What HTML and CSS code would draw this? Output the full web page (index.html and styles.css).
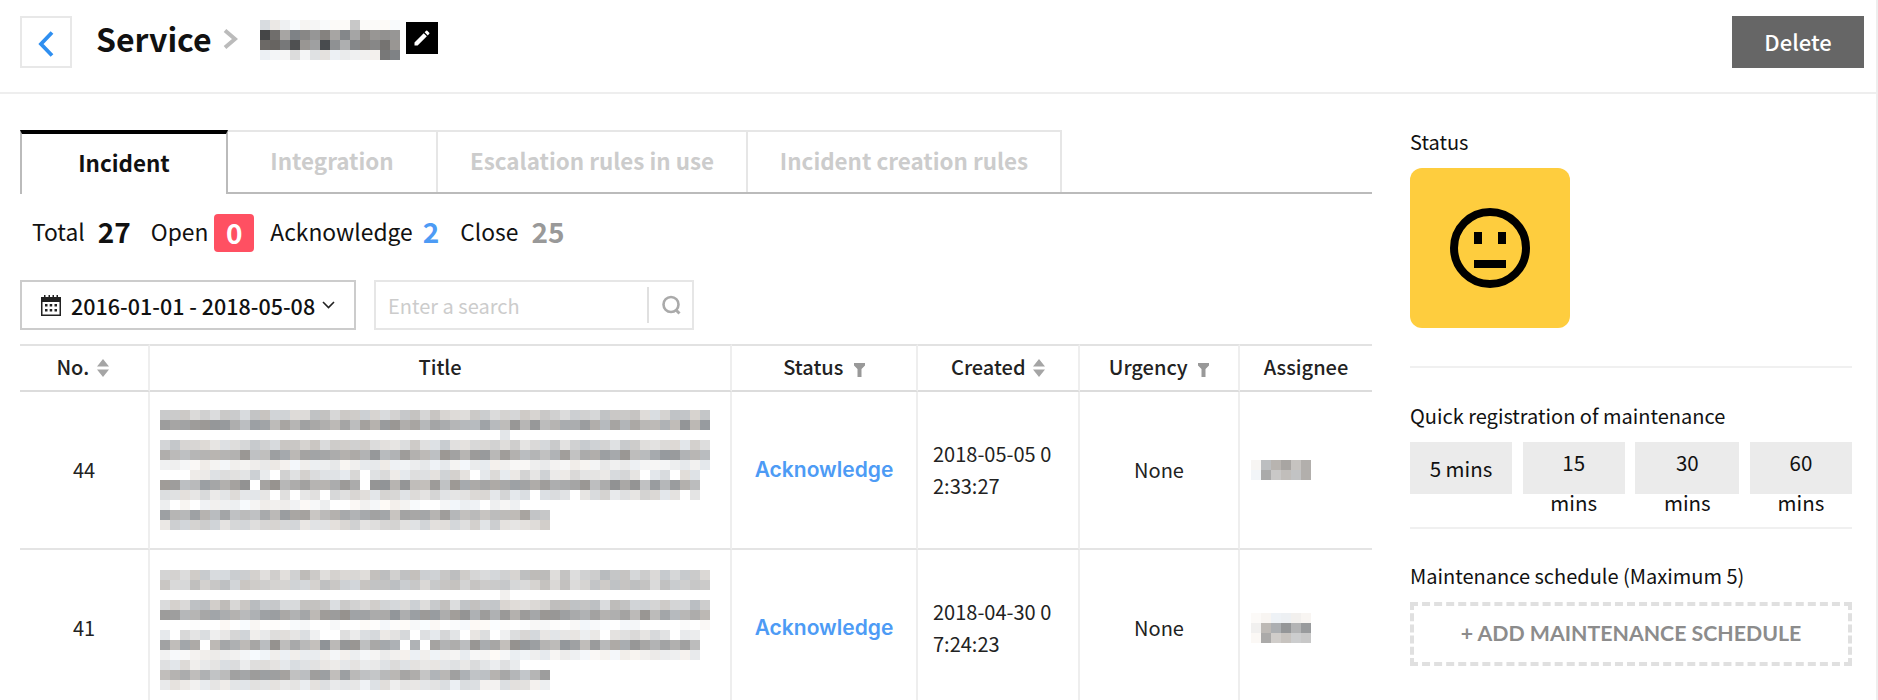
FILE: index.html
```html
<!DOCTYPE html>
<html lang="en">

<head>
    <meta charset="UTF-8">
    <meta name="viewport" content="width=device-width, initial-scale=1.0">
    <title>Service</title>
    <link rel="stylesheet" href="styles.css">
</head>

<body>
    <div class="page">
        <div class="top">
            <a class="back">
                <svg width="16" height="26" viewBox="0 0 16 26">
                    <path d="M14 1.500L3 13l11 11.500" fill="none" stroke="#2f8ff0" stroke-width="3.800"></path>
                </svg>
            </a>
            <h1 class="title">Service</h1>
            <svg class="crumb" width="15" height="20" viewBox="0 0 15 20">
                <path d="M2 1.500L12 10 2 18.500" fill="none" stroke="#bbb" stroke-width="4"></path>
            </svg>
            <svg class="mosaic name" data-key="name" width="140" height="40"></svg>
            <a class="edit">
                <svg width="20" height="20" viewBox="0 0 24 24">
                    <path fill="#fff" d="M3 17.250V21h3.750L17.810 9.940l-3.750-3.750L3 17.250zM20.710 7.040a1 1 0 0 0 0-1.410l-2.340-2.340a1 1 0 0 0-1.410 0l-1.830 1.830 3.750 3.750 1.830-1.830z"></path>
                </svg>
            </a>
            <button class="delete">Delete</button>
        </div>

        <div class="main">
            <div class="left">
                <div class="tabs">
                    <div class="tab active tab1">Incident</div>
                    <div class="tab tab2">Integration</div>
                    <div class="tab tab3">Escalation rules in use</div>
                    <div class="tab tab4">Incident creation rules</div>
                </div>

                <div class="stats">
                    <span class="stat-label">Total</span>
                    <b class="stat-num total">27</b>
                    <span class="stat-label">Open</span>
                    <b class="badge">0</b>
                    <span class="stat-label">Acknowledge</span>
                    <b class="stat-num ack">2</b>
                    <span class="stat-label">Close</span>
                    <b class="stat-num closed">25</b>
                </div>

                <div class="filters">
                    <div class="date-box">
                        <svg width="22" height="22" viewBox="0 0 22 22">
                            <path fill="#222" d="M1 3h3V1h1.500v2h3V1H10v2h2.500V1H14v2h2.500V1H18v2h3v19H1zM2.500 8v12.500h17V8z"></path>
                            <path fill="#222" d="M5 10h2.500v2.500H5zM9.700 10h2.500v2.500H9.700zM14.500 10H17v2.500h-2.500zM5 15h2.500v2.500H5zM9.700 15h2.500v2.500H9.700zM14.500 15H17v2.500h-2.500z"></path>
                        </svg>
                        <span class="date-text">2016-01-01 - 2018-05-08</span>
                        <svg width="13" height="8" viewBox="0 0 13 8">
                            <path d="M1 1l5.500 5.500L12 1" fill="none" stroke="#222" stroke-width="1.600"></path>
                        </svg>
                    </div>
                    <div class="search-box">
                        <span class="search-text">Enter a search</span>
                        <span class="search-icon">
                            <svg width="22" height="20" viewBox="0 0 22 20">
                                <circle cx="10" cy="9.500" r="7.500" fill="none" stroke="#aaa" stroke-width="2.600"></circle>
                                <path d="M14.500 14.500l4 4" stroke="#aaa" stroke-width="3"></path>
                            </svg>
                        </span>
                    </div>
                </div>

                <table class="list">
                    <thead>
                        <tr>
                            <th class="col-no">No. <svg class="sort" width="12" height="18" viewBox="0 0 12 18"><path fill="#a5a5a5" d="M6 0l6 7.500H0zM0 10.500h12L6 18z"></path></svg></th>
                            <th class="col-title">Title</th>
                            <th class="col-status">Status <svg class="funnel" width="11" height="14" viewBox="0 0 11 14"><path fill="#999" d="M0 0h11v2.500L7.500 6v8h-4V6L0 2.500z"></path></svg></th>
                            <th class="col-created">Created <svg class="sort" width="12" height="18" viewBox="0 0 12 18"><path fill="#a5a5a5" d="M6 0l6 7.500H0zM0 10.500h12L6 18z"></path></svg></th>
                            <th class="col-urgency">Urgency <svg class="funnel" width="11" height="14" viewBox="0 0 11 14"><path fill="#999" d="M0 0h11v2.500L7.500 6v8h-4V6L0 2.500z"></path></svg></th>
                            <th class="col-assignee">Assignee</th>
                        </tr>
                    </thead>
                    <tbody>
                        <tr>
                            <td class="center">44</td>
                            <td class="cell-title"><svg class="mosaic" data-key="title1" width="550" height="120"></svg></td>
                            <td class="center"><a class="status-link">Acknowledge</a></td>
                            <td class="cell-date">2018-05-05 02:33:27</td>
                            <td class="center">None</td>
                            <td class="cell-user"><svg class="mosaic" data-key="user1" width="60" height="20"></svg></td>
                        </tr>
                        <tr>
                            <td class="center">41</td>
                            <td class="cell-title lower"><svg class="mosaic" data-key="title2" width="550" height="120"></svg></td>
                            <td class="center"><a class="status-link">Acknowledge</a></td>
                            <td class="cell-date">2018-04-30 07:24:23</td>
                            <td class="center">None</td>
                            <td class="cell-user"><svg class="mosaic" data-key="user2" width="60" height="30"></svg></td>
                        </tr>
                    </tbody>
                </table>
            </div>

            <div class="side">
                <div class="side-label">Status</div>
                <div class="status-box">
                    <svg width="80" height="80" viewBox="0 0 80 80">
                        <circle cx="40" cy="40" r="36" fill="none" stroke="#000" stroke-width="8"></circle>
                        <rect x="24" y="24" width="8" height="12"></rect>
                        <rect x="48" y="24" width="8" height="12"></rect>
                        <rect x="24" y="52" width="32" height="8"></rect>
                    </svg>
                </div>
                <div class="rule rule1"></div>

                <div class="side-label label2">Quick registration of maintenance</div>
                <div class="quick">
                    <button class="quick-btn">5 mins</button>
                    <button class="quick-btn">15 mins</button>
                    <button class="quick-btn wide">30 mins</button>
                    <button class="quick-btn">60 mins</button>
                </div>
                <div class="rule rule2"></div>

                <div class="side-label label3">Maintenance schedule (Maximum 5)</div>
                <div class="add-box">+ ADD MAINTENANCE SCHEDULE</div>
            </div>
        </div>
    </div>
    <script src="mosaic.js"></script>
</body>

</html>
```

FILE: styles.css
```css
* {
    margin: 0;
    padding: 0;
    box-sizing: border-box;
    font-family: "Noto Sans CJK KR", "Noto Sans", sans-serif;
}

html,
body {
    height: 700px;
    overflow: hidden;
    background: #fff;
    color: #222;
}

.page {
    height: 700px;
    border-right: 2px solid #eee;
    overflow: hidden;
}

svg {
    display: block;
}

/* top bar */
.top {
    display: flex;
    align-items: flex-start;
    height: 94px;
    padding: 16px 12px 0 20px;
    border-bottom: 2px solid #eee;
}

.back {
    display: flex;
    align-items: center;
    justify-content: center;
    width: 52px;
    height: 52px;
    padding-top: 4px;
    border: 2px solid #e8e8e8;
}

.title {
    margin-left: 24px;
    font-size: 32px;
    line-height: 44px;
    font-weight: 700;
    color: #111;
}

.crumb {
    margin: 13px 0 0 11px;
}

.name {
    margin: 4px 0 0 22px;
}

.edit {
    display: flex;
    align-items: center;
    justify-content: center;
    width: 32px;
    height: 32px;
    margin: 6px 0 0 6px;
    background: #000;
}

.delete {
    width: 132px;
    height: 52px;
    margin-left: auto;
    padding-bottom: 2px;
    border: none;
    background: #666;
    color: #fff;
    font-size: 22px;
    font-weight: 500;
}

/* layout */
.main {
    display: flex;
    padding: 36px 24px 0 20px;
}

.left {
    width: 1352px;
    flex-shrink: 0;
}

.side {
    width: 442px;
    margin-left: 38px;
}

/* tabs */
.tabs {
    display: flex;
    height: 64px;
    border-bottom: 2px solid #bbb;
}

.tab {
    height: 62px;
    border-top: 2px solid #e6e6e6;
    border-right: 2px solid #e6e6e6;
    font-size: 22.400px;
    line-height: 56px;
    font-weight: 700;
    text-align: center;
    color: #ccc;
}

.tab.active {
    height: 64px;
    border-top: 4px solid #000;
    border-left: 2px solid #bbb;
    border-right: 2px solid #bbb;
    background: #fff;
    color: #111;
    line-height: 56px;
}

.tab1 { width: 208px; }
.tab2 { width: 210px; }
.tab3 { width: 310px; }
.tab4 { width: 314px; }

/* counters */
.stats {
    display: flex;
    align-items: center;
    height: 38px;
    margin-top: 20px;
    padding-left: 12px;
}

.stat-label {
    padding-bottom: 4px;
    font-size: 22.800px;
    color: #111;
}

.stat-num {
    padding-bottom: 4px;
    font-size: 28px;
    font-weight: 700;
    line-height: 32px;
}

.total {
    margin: 0 20px 0 13px;
    color: #111;
}

.ack {
    margin: 0 21px 0 10px;
    color: #4d9bf5;
}

.closed {
    margin-left: 13px;
    color: #999;
}

.badge {
    width: 40px;
    height: 38px;
    margin: 0 16px 0 6px;
    border-radius: 4px;
    background: #ff5062;
    color: #fff;
    font-size: 28px;
    line-height: 36px;
    text-align: center;
}

/* date and search */
.filters {
    display: flex;
    height: 50px;
    margin-top: 28px;
}

.date-box {
    display: flex;
    align-items: center;
    width: 336px;
    border: 2px solid #ccc;
    padding-left: 18px;
}

.date-text {
    margin: 0 7px 0 9px;
    font-size: 21.500px;
    font-weight: 500;
    white-space: nowrap;
    color: #111;
}

.search-box {
    display: flex;
    align-items: center;
    width: 320px;
    margin-left: 18px;
    border: 2px solid #e6e6e6;
    padding-left: 12px;
}

.search-text {
    width: 259px;
    font-size: 20px;
    color: #ccc;
}

.search-icon {
    display: flex;
    align-items: center;
    height: 36px;
    padding-left: 12px;
    border-left: 2px solid #e0e0e0;
}

/* table */
.list {
    width: 1352px;
    margin-top: 14px;
    table-layout: fixed;
    border-collapse: separate;
    border-spacing: 0;
}

.list th {
    height: 48px;
    padding-bottom: 4px;
    border-top: 2px solid #e2e2e2;
    border-bottom: 2px solid #dcdcdc;
    border-right: 2px solid #eee;
    font-size: 20px;
    font-weight: 500;
    color: #222;
    white-space: nowrap;
}

.list th:last-child,
.list td:last-child {
    border-right: none;
}

.list th svg {
    display: inline-block;
    margin-left: 3px;
    vertical-align: -2px;
}

.list th .funnel {
    margin-left: 6px;
}

.col-no { width: 130px; padding-right: 3px; }
.col-title { width: 582px; }
.col-status { width: 186px; }
.col-created { width: 162px; }
.col-urgency { width: 160px; }
.col-assignee { width: 132px; }

.list td {
    height: 158px;
    border-bottom: 2px solid #e4e4e4;
    border-right: 2px solid #eee;
    font-size: 20px;
    color: #222;
}

.list td.center {
    padding-bottom: 2px;
    text-align: center;
}

.cell-title {
    padding-left: 10px;
}

.list td.lower {
    padding-top: 4px;
}

.list td.cell-date {
    padding: 0 17px 1px 15px;
    line-height: 32px;
    word-break: break-all;
}

.cell-user {
    padding-left: 11px;
}

.status-link {
    position: relative;
    top: -1px;
    font-family: Inter, sans-serif;
    font-size: 21px;
    font-weight: 600;
    color: #4d9bf5;
}

/* right column */
.side-label {
    height: 26px;
    font-size: 20px;
    line-height: 24px;
    white-space: nowrap;
    color: #111;
}

.status-box {
    display: flex;
    align-items: center;
    justify-content: center;
    width: 160px;
    height: 160px;
    margin-top: 12px;
    border-radius: 12px;
    background: #fecd3e;
}

.rule {
    height: 2px;
    background: #f0f0f0;
}

.rule1 {
    margin-top: 38px;
}

.label2 {
    margin-top: 36px;
}

.quick {
    display: flex;
    justify-content: space-between;
    margin-top: 12px;
}

.quick-btn {
    width: 102px;
    height: 52px;
    padding: 0 16px;
    border: none;
    background: #ebebeb;
    color: #111;
    font-size: 20.500px;
    line-height: 40px;
}

.quick-btn.wide {
    width: 104px;
}

.rule2 {
    margin-top: 33px;
}

.label3 {
    margin-top: 35px;
}

.add-box {
    height: 64px;
    margin-top: 12px;
    border: 4px dashed #e0e0e0;
    font-family: Lato, sans-serif;
    font-size: 21.300px;
    font-weight: 700;
    line-height: 54px;
    text-align: center;
    color: #8c8c8c;
}
```

FILE: mosaic.js
```js
// blurred-out text, drawn as 10px grey cells
// each row: [grey, spread, first col, last col, gap chance], or a plain list of greys
let mosaics = {
    name: [
        [220, 232, 240, 250, 244, 245, 250, 250, 250, 200, 250, 250, 250, 250],
        [70, 110, 165, 130, 135, 150, 130, 165, 135, 165, 135, 150, 145, 150],
        [105, 100, 120, 80, 150, 160, 75, 145, 175, 135, 130, 135, 115, 150],
        [240, 245, 245, 220, 245, 225, 225, 240, 235, 240, 240, 240, 120, 130]
    ],
    title1: [
        { row: [208, 14, 0, 54, 0] },
        { row: [168, 22, 0, 54, 0] },
        { row: [230, 0, 34, 34, 0] },
        { row: [214, 16, 0, 54, 0] },
        { row: [172, 22, 0, 54, 0] },
        { row: [240, 8, 0, 54, 0] },
        { row: [222, 14, 3, 53, 0.12] },
        { row: [170, 24, 0, 53, 0.05] },
        { row: [222, 12, 0, 53, 0.05] },
        { row: [243, 7, 0, 35, 0.1] },
        { row: [178, 22, 0, 38, 0] },
        { row: [218, 14, 0, 38, 0] }
    ],
    title2: [
        { row: [205, 18, 0, 54, 0] },
        { row: [205, 14, 0, 54, 0] },
        { row: [240, 0, 34, 34, 0] },
        { row: [205, 18, 0, 54, 0] },
        { row: [165, 22, 0, 54, 0] },
        { row: [250, 4, 0, 54, 0.5] },
        { row: [226, 14, 0, 53, 0.08] },
        { row: [170, 24, 0, 53, 0.05] },
        { row: [242, 8, 0, 53, 0] },
        { row: [228, 10, 0, 35, 0.05] },
        { row: [178, 22, 0, 38, 0] },
        { row: [232, 12, 0, 38, 0] }
    ],
    user1: [
        [245, 190, 180, 165, 195, 175],
        [245, 170, 200, 190, 195, 175]
    ],
    user2: [
        [250, 245, 242, 240, 240, 245],
        [240, 185, 175, 150, 180, 155],
        [248, 170, 205, 195, 205, 200]
    ]
};

let seed = 7;

function rnd() {
    seed = (seed * 16807) % 2147483647;
    return seed / 2147483647;
}

function cell(c, r, g) {
    let tint = Math.round((rnd() - 0.5) * 8);
    let red = Math.min(255, g + tint);
    let blue = Math.min(255, g - tint);
    return `<rect x="${c * 10}" y="${r * 10}" width="10" height="10" fill="rgb(${red},${Math.min(255, g)},${blue})"></rect>`;
}

document.querySelectorAll('.mosaic').forEach(function (svg) {
    let rows = mosaics[svg.dataset.key];
    let html = "";
    for (let r = 0; r < rows.length; r++) {
        if (Array.isArray(rows[r])) {
            rows[r].forEach(function (g, c) {
                html += cell(c, r, g);
            });
            continue;
        }
        let [grey, spread, first, last, gap] = rows[r].row;
        for (let c = first; c <= last; c++) {
            if (rnd() < gap) {
                continue;
            }
            html += cell(c, r, Math.round(grey + (rnd() - 0.5) * 2 * spread));
        }
    }
    svg.innerHTML = html;
});
```
